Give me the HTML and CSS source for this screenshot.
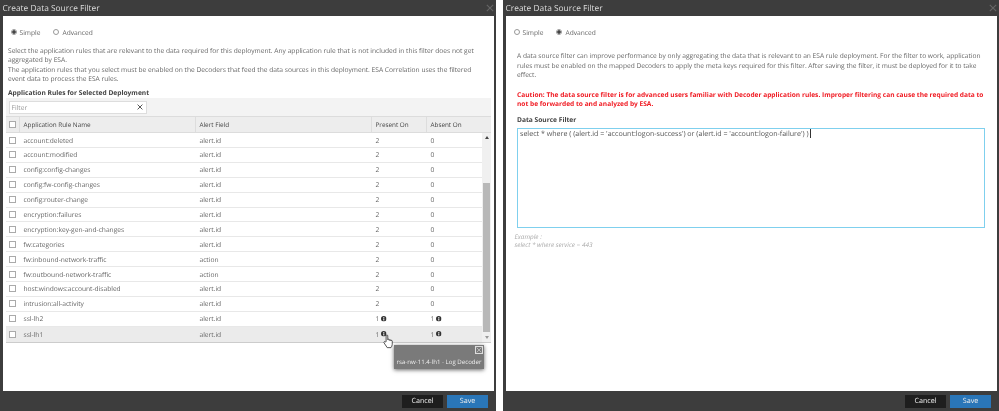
FILE: index.html
```html
<!DOCTYPE html>
<html>
<head>
  <title>Create Data Source Filter</title>
  <link rel="stylesheet" href="styles.css">
</head>
<body>
  <svg class="defs" width="0" height="0">
    <symbol id="info" viewBox="0 0 12 12">
      <circle cx="6" cy="6" r="6" fill="#333"/>
      <rect x="5" y="5.2" width="2.2" height="4.6" fill="#fff"/>
      <rect x="5" y="2.2" width="2.2" height="2" fill="#fff"/>
    </symbol>
  </svg>

  <div class="dialog">
    <div class="title-bar">
      <span class="title">Create Data Source Filter</span>
      <svg class="close" viewBox="0 0 10 10"><path d="M1 1L9 9M9 1L1 9"/></svg>
    </div>
    <div class="content">
      <div class="modes">
        <span class="mode"><span class="radio checked"></span>Simple</span>
        <span class="mode"><span class="radio"></span>Advanced</span>
      </div>
      <p class="intro">Select the application rules that are relevant to the data required for this deployment. Any application rule that is not included in this filter does not get aggregated by ESA.<br>The application rules that you select must be enabled on the Decoders that feed the data sources in this deployment. ESA Correlation uses the filtered event data to process the ESA rules.</p>
      <h4 class="rules-heading">Application Rules for Selected Deployment</h4>
      <div class="filter-bar">
        <div class="filter-input">
          <span>Filter</span>
          <svg class="filter-clear" viewBox="0 0 10 10"><path d="M1 1L9 9M9 1L1 9"/></svg>
        </div>
      </div>
      <div class="grid">
        <div class="row head">
          <span class="cell check"><span class="box"></span></span>
          <span class="cell name">Application Rule Name</span>
          <span class="cell field">Alert Field</span>
          <span class="cell present">Present On</span>
          <span class="cell absent">Absent On</span>
        </div>
        <div class="grid-body">
          <div class="rows">
            <div class="row"><span class="cell check"><span class="box"></span></span><span class="cell name">account:deleted</span><span class="cell field">alert.id</span><span class="cell present">2</span><span class="cell absent">0</span></div>
            <div class="row"><span class="cell check"><span class="box"></span></span><span class="cell name">account:modified</span><span class="cell field">alert.id</span><span class="cell present">2</span><span class="cell absent">0</span></div>
            <div class="row"><span class="cell check"><span class="box"></span></span><span class="cell name">config:config-changes</span><span class="cell field">alert.id</span><span class="cell present">2</span><span class="cell absent">0</span></div>
            <div class="row"><span class="cell check"><span class="box"></span></span><span class="cell name">config:fw-config-changes</span><span class="cell field">alert.id</span><span class="cell present">2</span><span class="cell absent">0</span></div>
            <div class="row"><span class="cell check"><span class="box"></span></span><span class="cell name">config:router-change</span><span class="cell field">alert.id</span><span class="cell present">2</span><span class="cell absent">0</span></div>
            <div class="row"><span class="cell check"><span class="box"></span></span><span class="cell name">encryption:failures</span><span class="cell field">alert.id</span><span class="cell present">2</span><span class="cell absent">0</span></div>
            <div class="row"><span class="cell check"><span class="box"></span></span><span class="cell name">encryption:key-gen-and-changes</span><span class="cell field">alert.id</span><span class="cell present">2</span><span class="cell absent">0</span></div>
            <div class="row"><span class="cell check"><span class="box"></span></span><span class="cell name">fw:categories</span><span class="cell field">alert.id</span><span class="cell present">2</span><span class="cell absent">0</span></div>
            <div class="row"><span class="cell check"><span class="box"></span></span><span class="cell name">fw:inbound-network-traffic</span><span class="cell field">action</span><span class="cell present">2</span><span class="cell absent">0</span></div>
            <div class="row"><span class="cell check"><span class="box"></span></span><span class="cell name">fw:outbound-network-traffic</span><span class="cell field">action</span><span class="cell present">2</span><span class="cell absent">0</span></div>
            <div class="row"><span class="cell check"><span class="box"></span></span><span class="cell name">host:windows:account-disabled</span><span class="cell field">alert.id</span><span class="cell present">2</span><span class="cell absent">0</span></div>
            <div class="row"><span class="cell check"><span class="box"></span></span><span class="cell name">intrusion:all-activity</span><span class="cell field">alert.id</span><span class="cell present">2</span><span class="cell absent">0</span></div>
            <div class="row"><span class="cell check"><span class="box"></span></span><span class="cell name">ssl-lh2</span><span class="cell field">alert.id</span><span class="cell present">1 <svg class="info"><use href="#info"/></svg></span><span class="cell absent">1 <svg class="info"><use href="#info"/></svg></span></div>
            <div class="row hover"><span class="cell check"><span class="box"></span></span><span class="cell name">ssl-lh1</span><span class="cell field">alert.id</span><span class="cell present">1 <svg class="info"><use href="#info"/></svg></span><span class="cell absent">1 <svg class="info"><use href="#info"/></svg></span></div>
          </div>
          <div class="scrollbar">
            <span class="arrow up"></span>
            <div class="thumb"></div>
            <span class="arrow down"></span>
          </div>
        </div>
      </div>

      <div class="tooltip">
        <span class="tooltip-close"><svg viewBox="0 0 10 10"><path d="M1 1L9 9M9 1L1 9"/></svg></span>
        <span class="tooltip-text">rsa-nw-11.4-lh1 - Log Decoder</span>
      </div>
      <svg class="hand" viewBox="0 0 12 16">
        <path d="M3.4 8.2V1.8c0-1.2 1.8-1.2 1.8 0v4.4c0-1 1.7-1 1.7 0v.6c0-1 1.6-1 1.6 0v.6c0-.9 1.6-.9 1.6 .1v3.6c0 1.6-.8 2.6-1.4 3.6H4.6L1.2 9.6c-.8-1.2.8-2.2 1.6-1.2z" fill="#fff" stroke="#333" stroke-width=".9"/>
      </svg>
    </div>
    <div class="footer">
      <button class="btn cancel">Cancel</button>
      <button class="btn save">Save</button>
    </div>
  </div>

  <div class="dialog">
    <div class="title-bar">
      <span class="title">Create Data Source Filter</span>
      <svg class="close" viewBox="0 0 10 10"><path d="M1 1L9 9M9 1L1 9"/></svg>
    </div>
    <div class="content">
      <div class="modes">
        <span class="mode"><span class="radio"></span>Simple</span>
        <span class="mode"><span class="radio checked"></span>Advanced</span>
      </div>
      <div class="advanced">
        <p class="about">A data source filter can improve performance by only aggregating the data that is relevant to an ESA rule deployment. For the filter to work, application rules must be enabled on the mapped Decoders to apply the meta keys required for this filter. After saving the filter, it must be deployed for it to take effect.</p>
        <p class="caution">Caution: The data source filter is for advanced users familiar with Decoder application rules. Improper filtering can cause the required data to not be forwarded to and analyzed by ESA.</p>
        <h4 class="filter-heading">Data Source Filter</h4>
        <div class="query">select * where ( (alert.id = 'account:logon-success') or (alert.id = 'account:logon-failure') )<span class="caret"></span></div>
      </div>
      <div class="example"><div>Example :</div><div>select * where service = 443</div></div>
    </div>
    <div class="footer">
      <button class="btn cancel">Cancel</button>
      <button class="btn save">Save</button>
    </div>
  </div>
</body>
</html>
```

FILE: styles.css
```css
* {
  box-sizing: border-box;
}

html, body {
  height: 100%;
}

body {
  margin: 0;
  background: #fff;
  display: flex;
  gap: 7px;
  overflow: hidden;
  font-family: "Open Sans", "Liberation Sans", sans-serif;
  font-size: 6.65px;
  text-rendering: geometricPrecision;
  color: #555;
  will-change: transform;
}

.defs {
  position: absolute;
}

.dialog {
  width: 496px;
  height: 411px;
  background: #3d3d3d;
  display: flex;
  flex-direction: column;
  padding: 0 2.5px;
}

.title-bar {
  height: 16px;
  flex: none;
  display: flex;
  align-items: center;
  justify-content: space-between;
}

.title {
  font-size: 8.4px;
  color: #ddd;
}

.close {
  width: 8px;
  height: 8px;
  fill: none;
  stroke: #666;
  stroke-width: 1.4;
}

.content {
  flex: 1;
  background: #fff;
  position: relative;
  padding-top: 11px;
}

.footer {
  height: 20px;
  flex: none;
  display: flex;
  justify-content: flex-end;
  align-items: center;
  gap: 4px;
  padding-right: 5.5px;
}

.btn {
  width: 41px;
  height: 13px;
  border: 0;
  padding: 0;
  font-family: inherit;
  font-size: 7.2px;
  text-rendering: geometricPrecision;
  color: #eee;
}

.cancel {
  background: #1e1e1e;
}

.save {
  background: #2a76b8;
}

.modes {
  display: flex;
  gap: 13px;
  height: 10px;
  align-items: center;
  padding-left: 8px;
}

.mode {
  display: flex;
  align-items: center;
  gap: 3px;
  color: #666;
}

.radio {
  width: 6px;
  height: 6px;
  border: 1px solid #999;
  border-radius: 50%;
  display: inline-block;
  background: #fff;
}

.radio.checked {
  background: radial-gradient(circle, #444 0 1.5px, #fff 2px);
}

.intro {
  margin: 9px 0 0;
  padding: 0 16px 0 5.5px;
  line-height: 9.4px;
  color: #666;
}

.rules-heading {
  margin: 4px 0 0;
  padding-left: 5.5px;
  font-size: 6.65px;
  line-height: 10px;
  color: #444;
  font-weight: 700;
}

.filter-bar {
  margin: 0 2.5px 0 3px;
  height: 18.5px;
  background: #f3f3f3;
  padding: 3px 0 0 3px;
}

.filter-input {
  width: 138px;
  height: 13px;
  background: #fff;
  border: 1px solid #ddd;
  display: flex;
  align-items: center;
  justify-content: space-between;
  padding: 0 3px 0 2px;
  color: #999;
}

.filter-clear {
  width: 6px;
  height: 6px;
  fill: none;
  stroke: #444;
  stroke-width: 1.5;
}

.grid {
  margin: 0 2.5px 0 3px;
  background: #f3f3f3;
  border-bottom: 1px solid #ccc;
}

.grid-body {
  display: flex;
}

.rows {
  flex: 1;
}

.row {
  display: grid;
  grid-template-columns: 13px 176px 176px 55px 1fr;
  height: 14.9px;
  align-items: center;
  background: #fff;
  border-bottom: 1px solid #e8e8e8;
  color: #666;
}

.row.head {
  height: 17px;
  font-size: 6.35px;
  background: #ededed;
  border-top: 1px solid #dcdcdc;
  border-bottom: 1px solid #dcdcdc;
  color: #444;
}

.row.hover {
  background: #ebebeb;
  border-bottom: 0;
}

.cell {
  padding-left: 5px;
  height: 100%;
  display: flex;
  align-items: center;
  white-space: pre;
}

.head .cell + .cell + .cell, .head .name {
  border-left: 1px solid #ddd;
  padding-left: 4px;
}

.check {
  padding-left: 3.5px;
}

.box {
  width: 7px;
  height: 7px;
  background: #fff;
  border: 1px solid #aaa;
  display: block;
}

.info {
  width: 5.5px;
  height: 5.5px;
}

.scrollbar {
  width: 9px;
  flex: none;
  background: #f0f0f0;
  display: flex;
  flex-direction: column;
  align-items: center;
  justify-content: space-between;
  padding: 3px 0;
  position: relative;
}

.thumb {
  position: absolute;
  left: 0.5px;
  right: 1.5px;
  top: 50px;
  height: 149px;
  background: #b8b8b8;
}

.arrow {
  width: 0;
  height: 0;
  border-left: 2px solid transparent;
  border-right: 2px solid transparent;
}

.arrow.up {
  border-bottom: 3px solid #444;
}

.arrow.down {
  border-top: 3px solid #999;
}

.tooltip {
  position: absolute;
  left: 391.5px;
  top: 329px;
  width: 90px;
  height: 24px;
  background: #7a7a7a;
  box-shadow: 0 1px 4px rgba(0, 0, 0, .6);
  color: #eee;
  font-size: 6.1px;
  text-align: center;
  padding-top: 12px;
}

.tooltip-text {
  white-space: nowrap;
}

.tooltip-close {
  position: absolute;
  right: 1px;
  top: 1px;
  width: 8px;
  height: 8px;
  border: 1px solid #ddd;
  display: flex;
}

.tooltip-close svg {
  fill: none;
  stroke: #ddd;
  stroke-width: 1;
}

.hand {
  position: absolute;
  left: 380.5px;
  top: 317.5px;
  width: 11px;
  height: 15px;
}

.advanced {
  padding: 0 10px 0 11.5px;
}

.about {
  margin: 14px 0 0;
  font-size: 6.62px;
  line-height: 9.5px;
  color: #666;
}

.caution {
  margin: 10px 0 0;
  font-size: 6.6px;
  line-height: 9.5px;
  font-weight: 700;
  color: #f01c24;
}

.filter-heading {
  margin: 6px 0 0;
  font-size: 6.65px;
  line-height: 10px;
  color: #444;
}

.query {
  margin: 3px 2px 0 0;
  height: 100px;
  border: 1px solid #7fd0ee;
  padding: 0 2px;
  font-size: 7.1px;
  line-height: 10px;
  color: #555;
}

.caret {
  display: inline-block;
  width: 1px;
  height: 9px;
  background: #333;
  vertical-align: middle;
  margin-left: 1px;
}

.example {
  margin-top: 5px;
  padding-left: 9px;
  font-style: italic;
  font-size: 6.4px;
  line-height: 8.4px;
  color: #aaa;
}
```
